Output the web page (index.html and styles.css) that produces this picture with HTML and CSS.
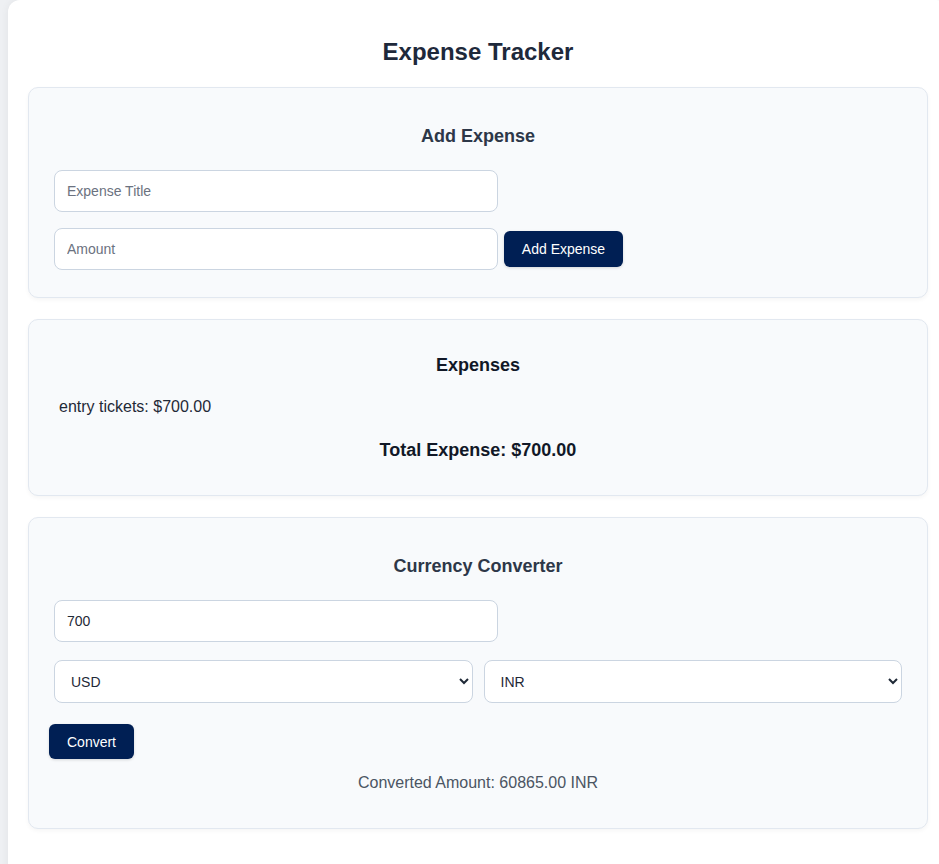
FILE: index.html
```html
<!DOCTYPE html>
<html>
<head>
<meta charset="utf-8">
<title>Expense Tracker</title>
<link rel="stylesheet" href="styles.css">
</head>
<body>
<div class="app">
  <h1 class="title">Expense Tracker</h1>

  <section class="card card-add">
    <h3 class="card-title slate">Add Expense</h3>
    <div class="row">
      <input class="field" type="text" placeholder="Expense Title">
    </div>
    <div class="row row-2">
      <input class="field" type="text" placeholder="Amount">
      <button class="btn btn-add">Add Expense</button>
    </div>
  </section>

  <section class="card card-list">
    <h3 class="card-title dark">Expenses</h3>
    <ul class="list">
      <li class="item">entry tickets: $700.00</li>
    </ul>
    <p class="total">Total Expense: $700.00</p>
  </section>

  <section class="card card-conv">
    <h3 class="card-title slate">Currency Converter</h3>
    <div class="row">
      <input class="field field-value" type="text" value="700">
    </div>
    <div class="selects">
      <select class="sel"><option>USD</option></select>
      <select class="sel"><option>INR</option></select>
    </div>
    <button class="btn btn-convert">Convert</button>
    <p class="result">Converted Amount: 60865.00 INR</p>
  </section>
</div>
</body>
</html>
```

FILE: styles.css
```css
* { box-sizing: border-box; }

html, body {
  margin: 0;
  padding: 0;
  overflow: hidden;
}

body {
  background: #eef0f3;
  font-family: "Liberation Sans", Arial, sans-serif;
  height: 864px;
}

.app {
  width: 940px;
  margin-left: 8px;
  background: #ffffff;
  border-radius: 12px;
  padding: 20px 20px 40px;
  box-shadow: 0 0 8px rgba(0, 0, 0, 0.06);
}

.title {
  margin: 18px 0 21px;
  text-align: center;
  font-size: 24px;
  line-height: 28px;
  font-weight: 700;
  color: #1e293b;
}

.card {
  width: 900px;
  background: #f8fafc;
  border: 1px solid #e2e8f0;
  border-radius: 10px;
  padding: 20px;
  box-shadow: 0 2px 4px rgba(0, 0, 0, 0.04);
  margin-bottom: 21px;
}

.card-title {
  margin: 17px 0 23px;
  text-align: center;
  font-size: 18px;
  line-height: 22px;
  font-weight: 700;
}
.slate { color: #2d3748; }
.dark { color: #111827; margin-top: 14px; margin-bottom: 0; }

.row {
  display: flex;
  align-items: center;
  padding-left: 5px;
}
.row-2 {
  margin-top: 16px;
  margin-bottom: 7px;
}

.field {
  width: 444px;
  height: 42px;
  border: 1px solid #cbd5e1;
  border-radius: 8px;
  background: #ffffff;
  padding: 0 12px;
  font-family: "Liberation Sans", Arial, sans-serif;
  font-size: 14px;
  color: #111827;
  outline: none;
}
.field::placeholder { color: #6b7280; }
.field-value { color: #1f2937; }

.btn {
  border: none;
  border-radius: 6px;
  background: #001f54;
  color: #ffffff;
  font-family: "Liberation Sans", Arial, sans-serif;
  font-size: 14px;
  cursor: pointer;
  box-shadow: 0 1px 3px rgba(0, 0, 0, 0.15);
}
.btn-add {
  margin-left: 6px;
  width: 119px;
  height: 36px;
}

.list {
  list-style: none;
  margin: 22px 0 0;
  padding: 0 0 0 10px;
}
.item {
  font-size: 16px;
  line-height: 18px;
  color: #1f2937;
}

.total {
  margin: 23px 0 14px;
  text-align: center;
  font-size: 18px;
  line-height: 22px;
  font-weight: 700;
  color: #111827;
}

.selects {
  display: flex;
  gap: 11px;
  padding: 0 5px;
  margin-top: 18px;
}
.sel {
  flex: 1;
  height: 43px;
  border: 1px solid #cbd5e1;
  border-radius: 8px;
  background: #ffffff;
  padding: 0 12px;
  font-family: "Liberation Sans", Arial, sans-serif;
  font-size: 14px;
  color: #1f2937;
}

.btn-convert {
  display: block;
  margin-top: 21px;
  width: 85px;
  height: 35px;
}

.result {
  margin: 15px 0 16px;
  text-align: center;
  font-size: 16px;
  line-height: 18px;
  color: #4b5563;
}
```
